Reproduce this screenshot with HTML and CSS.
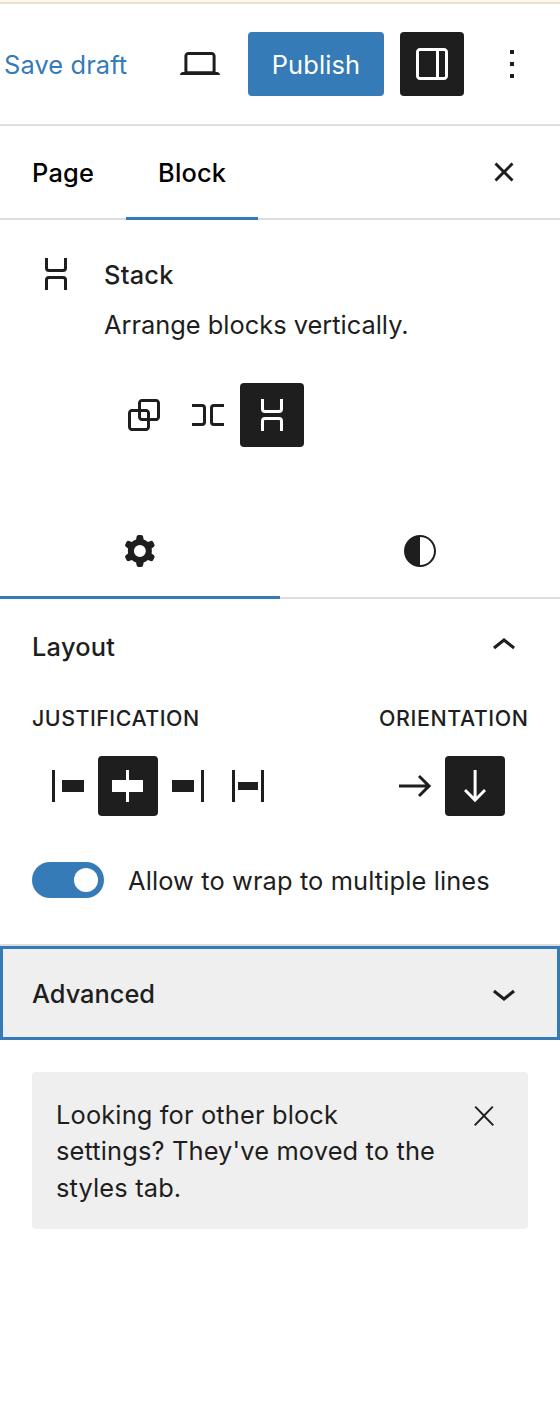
FILE: index.html
```html
<!DOCTYPE html>
<html lang="en">
<head>
<meta charset="utf-8">
<title>Editor settings</title>
<link rel="stylesheet" href="styles.css">
</head>
<body>
<div class="strip"></div>
<header class="topbar">
  <span class="save">Save draft</span>
  <span class="device"><svg class="icon" viewBox="0 0 24 24"><path d="M20.5 16h-.7V8c0-1.1-.9-2-2-2H6.2c-1.1 0-2 .9-2 2v8h-.7c-.8 0-1.5.7-1.5 1.5h20c0-.8-.7-1.5-1.5-1.5zM5.7 8c0-.3.2-.5.5-.5h11.6c.3 0 .5.2.5.5v7.6H5.7V8z"/></svg></span>
  <button class="publish">Publish</button>
  <button class="square dark"><svg class="icon" viewBox="0 0 24 24"><path d="M18 4H6c-1.1 0-2 .9-2 2v12c0 1.1.9 2 2 2h12c1.1 0 2-.9 2-2V6c0-1.1-.9-2-2-2zm-4 14.5H6c-.3 0-.5-.2-.5-.5V6c0-.3.2-.5.5-.5h8v13zm4.5-.5c0 .3-.2.5-.5.5h-2.5v-13H18c.3 0 .5.2.5.5v12z"/></svg></button>
  <button class="square more"><svg class="icon" viewBox="0 0 24 24"><path d="M13 19h-2v-2h2v2zm0-6h-2v-2h2v2zm0-6h-2V5h2v2z"/></svg></button>
</header>

<nav class="tabs">
  <span class="tab tab-page">Page</span>
  <span class="tab tab-block">Block</span>
  <svg class="icon tabs-close" viewBox="0 0 24 24"><path d="M12 13.06l3.712 3.713 1.061-1.06L13.061 12l3.712-3.712-1.06-1.06L12 10.938 8.288 7.227l-1.061 1.06L10.939 12l-3.712 3.712 1.06 1.061L12 13.061z"/></svg>
</nav>

<section class="card">
  <svg class="icon line" viewBox="0 0 24 24"><path d="M7.25 4v5a1.25 1.25 0 0 0 1.25 1.25h7A1.25 1.25 0 0 0 16.75 9V4M7.25 20v-5a1.25 1.25 0 0 1 1.25-1.25h7A1.25 1.25 0 0 1 16.75 15v5"/></svg>
  <div class="card-text">
    <h2 class="card-title">Stack</h2>
    <p class="card-desc">Arrange blocks vertically.</p>
  </div>
</section>

<div class="variations">
  <button class="square"><svg class="icon" viewBox="0 0 24 24"><path d="M18 4h-7c-1.1 0-2 .9-2 2v3H6c-1.1 0-2 .9-2 2v7c0 1.1.9 2 2 2h7c1.1 0 2-.9 2-2v-3h3c1.1 0 2-.9 2-2V6c0-1.1-.9-2-2-2zm-4.5 14c0 .3-.2.5-.5.5H6c-.3 0-.5-.2-.5-.5v-7c0-.3.2-.5.5-.5h3V13c0 1.1.9 2 2 2h2.5v3zm0-4.5H11c-.3 0-.5-.2-.5-.5v-2.5H13c.3 0 .5.2.5.5v2.5zm5-.5c0 .3-.2.5-.5.5h-3V11c0-1.1-.9-2-2-2h-2.5V6c0-.3.2-.5.5-.5h7c.3 0 .5.2.5.5v7z"/></svg></button>
  <button class="square"><svg class="icon line" viewBox="0 0 24 24"><path d="M4 7.25h5A1.25 1.25 0 0 1 10.25 8.5v7A1.25 1.25 0 0 1 9 16.75H4M20 7.25h-5A1.25 1.25 0 0 0 13.75 8.5v7A1.25 1.25 0 0 0 15 16.75h5"/></svg></button>
  <button class="square dark"><svg class="icon line" viewBox="0 0 24 24"><path d="M7.25 4v5a1.25 1.25 0 0 0 1.25 1.25h7A1.25 1.25 0 0 0 16.75 9V4M7.25 20v-5a1.25 1.25 0 0 1 1.25-1.25h7A1.25 1.25 0 0 1 16.75 15v5"/></svg></button>
</div>

<nav class="subtabs">
  <span class="subtab active"><svg class="icon" viewBox="0 0 24 24"><path fill-rule="evenodd" d="M10.289 4.836A1 1 0 0111.275 4h1.306a1 1 0 01.987.836l.244 1.466c.787.26 1.503.679 2.108 1.218l1.393-.522a1 1 0 011.216.437l.653 1.13a1 1 0 01-.23 1.273l-1.148.944a6.025 6.025 0 010 2.435l1.149.946a1 1 0 01.23 1.272l-.653 1.13a1 1 0 01-1.216.437l-1.394-.522c-.605.54-1.32.958-2.108 1.218l-.244 1.466a1 1 0 01-.987.836h-1.306a1 1 0 01-.986-.836l-.244-1.466a5.995 5.995 0 01-2.108-1.218l-1.394.522a1 1 0 01-1.217-.436l-.653-1.131a1 1 0 01.23-1.272l1.149-.946a6.026 6.026 0 010-2.435l-1.148-.944a1 1 0 01-.23-1.272l.653-1.131a1 1 0 011.217-.437l1.393.522a5.994 5.994 0 012.108-1.218l.244-1.466zM14.929 12a3 3 0 11-6 0 3 3 0 016 0z"/></svg></span>
  <span class="subtab"><svg class="icon" viewBox="0 0 24 24"><path d="M12 4c-4.4 0-8 3.6-8 8s3.6 8 8 8 8-3.6 8-8-3.6-8-8-8zm0 15V5c3.9 0 7 3.1 7 7s-3.1 7-7 7z"/></svg></span>
</nav>

<section class="layout">
  <div class="panel-head">
    <span class="panel-title">Layout</span>
    <svg class="icon" viewBox="0 0 24 24"><path d="M6.5 12.4L12 8l5.500 4.400-.9 1.200L12 10l-4.500 3.600-1-1.200z"/></svg>
  </div>
  <div class="controls">
    <div class="control">
      <span class="label">JUSTIFICATION</span>
      <div class="options">
        <button class="option"><svg class="icon" viewBox="0 0 24 24"><path d="M9 9v6h11V9H9zM4 20h1.500V4H4v16z"/></svg></button>
        <button class="option dark"><svg class="icon" viewBox="0 0 24 24"><path d="M12.500 15v5H11v-5H4V9h7V4h1.500v5h7v6h-7z"/></svg></button>
        <button class="option"><svg class="icon" viewBox="0 0 24 24"><path d="M4 15h11V9H4v6zM18.500 4v16H20V4h-1.500z"/></svg></button>
        <button class="option"><svg class="icon" viewBox="0 0 24 24"><path d="M4 4h1.500v16H4V4zm3 6v4h10v-4H7zm13-6h-1.500v16H20V4z"/></svg></button>
      </div>
    </div>
    <div class="control orient">
      <span class="label">ORIENTATION</span>
      <div class="options">
        <button class="option"><svg class="icon" viewBox="0 0 24 24"><path d="m14.500 6.500-1 1 3.700 3.700H4v1.600h13.200l-3.700 3.700 1 1 5.600-5.500z"/></svg></button>
        <button class="option dark"><svg class="icon" viewBox="0 0 24 24"><path d="m16.500 13.500-3.700 3.700V4h-1.500v13.200l-3.800-3.700-1 1 5.500 5.600 5.500-5.600z"/></svg></button>
      </div>
    </div>
  </div>
  <div class="wrap-row">
    <span class="toggle"><span class="knob"></span></span>
    <span class="wrap-label">Allow to wrap to multiple lines</span>
  </div>
</section>

<section class="advanced">
  <span class="advanced-title">Advanced</span>
  <svg class="icon" viewBox="0 0 24 24"><path d="M17.500 11.600L12 16l-5.500-4.400.9-1.200L12 14l4.500-3.600 1 1.200z"/></svg>
</section>

<aside class="notice">
  <p class="notice-text">Looking for other block<br>settings? They've moved to the<br>styles tab.</p>
  <svg class="notice-close" viewBox="0 0 24 24"><path d="M13 11.800l6.100-6.300-1-1-6.100 6.200-6.100-6.200-1 1 6.100 6.300-6.500 6.700 1 1 6.500-6.600 6.500 6.600 1-1z"/></svg>
</aside>
</body>
</html>
```
FILE: styles.css
```css
* { box-sizing: border-box; }
body {
  margin: 0;
  background: #fff;
  color: #1e1e1e;
  font-family: Inter, "Liberation Sans", sans-serif;
  font-size: 25.4px;
  line-height: 36px;
}
button {
  border: 0;
  padding: 0;
  background: none;
  color: inherit;
  font: inherit;
  display: flex;
  align-items: center;
  justify-content: center;
}
h2, p { margin: 0; font-size: inherit; }
span, p { white-space: nowrap; }
.icon { width: 48px; height: 48px; fill: currentColor; flex: none; display: block; }
.icon.line { fill: none; stroke: currentColor; stroke-width: 1.5; }
.dark { background: #1e1e1e; color: #fff; border-radius: 4px; }
.square { width: 64px; height: 64px; flex: none; }

.strip { height: 4px; background: #fdf6ed; border-bottom: 2px solid #ebe1d1; }
.topbar {
  height: 122px;
  border-bottom: 2px solid #e0e0e0;
  display: flex;
  align-items: center;
  padding-left: 4px;
}
.save { color: #347bb7; width: 172px; padding-top: 2px; letter-spacing: 0.12px; }
.device { width: 72px; }
.publish {
  width: 136px;
  height: 64px;
  padding-top: 2px;
  background: #347bb7;
  color: #fff;
  border-radius: 4px;
  margin-right: 16px;
  letter-spacing: 0.15px;
}
.more { margin-left: 16px; }

.tabs {
  height: 94px;
  display: flex;
  color: #000;
  font-weight: 500;
  letter-spacing: 0.2px;
  box-shadow: inset 0 -2px #ddd;
}
.tab { padding: 29px 32px 0; }
.tab-page { width: 126px; }
.tab-block { width: 132px; border-bottom: 3px solid #347bb7; }
.tabs-close { margin: 22px 32px 0 auto; color: #1e1e1e; }

.card { display: flex; padding: 30px 32px 0; gap: 24px; }
.card-text { padding-top: 7px; }
.card-title { font-weight: 500; height: 50px; letter-spacing: 0.25px; }
.card-desc { height: 36px; }

.variations { display: flex; padding: 40px 112px 0; }
.subtabs { display: flex; height: 96px; margin-top: 56px; box-shadow: inset 0 -2px #ddd; }
.subtab { flex: 1; display: flex; justify-content: center; padding-top: 24px; }
.subtab.active { border-bottom: 3px solid #347bb7; }

.layout { height: 347px; padding: 23px 32px 0; border-bottom: 2px solid #ddd; }
.panel-head { display: flex; justify-content: space-between; align-items: center; height: 48px; font-weight: 500; }
.panel-title { padding-top: 2px; letter-spacing: 0.25px; }
.controls { display: flex; justify-content: space-between; padding-top: 33px; }
.label { display: block; height: 30px; line-height: 30px; font-size: 21.4px; font-weight: 500; letter-spacing: 0.5px; }
.options { display: flex; padding: 23px 6px 0; }
.option { width: 60px; height: 60px; }
.orient { width: 149px; }
.orient .label { letter-spacing: 0.6px; }
.orient .options { justify-content: flex-end; padding-right: 23px; }
.wrap-row { display: flex; align-items: center; gap: 24px; height: 36px; margin-top: 46px; }
.wrap-label { padding-top: 2px; letter-spacing: 0.12px; }
.toggle { width: 72px; height: 36px; border-radius: 18px; background: #347bb7; padding: 6px; display: flex; justify-content: flex-end; }
.knob { width: 24px; height: 24px; border-radius: 50%; background: #fff; }

.advanced {
  height: 94px;
  background: #efefef;
  border: 3px solid #347bb7;
  display: flex;
  align-items: center;
  justify-content: space-between;
  padding: 0 29px;
  font-weight: 500;
}
.advanced-title { padding-top: 2px; }
.notice {
  margin: 32px 32px 0;
  height: 157px;
  padding: 24px 28px 0 24px;
  background: #efefef;
  border-radius: 4px;
  display: flex;
  justify-content: space-between;
}
.notice-text { line-height: 36.4px; padding-top: 1px; letter-spacing: 0.15px; }
.notice-close { width: 32px; height: 32px; margin-top: 4px; fill: #1e1e1e; flex: none; }
```
